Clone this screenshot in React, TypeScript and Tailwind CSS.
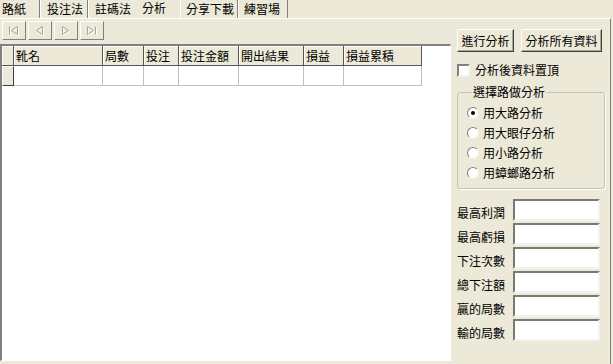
import React from "react";

const tabs = [
  { label: "路紙", cls: "w-[40px] pl-[2px] border-r border-[#808080]" },
  { label: "投注法", cls: "w-[48px] pl-[6px] border-l border-l-white border-r border-r-[#808080]" },
  { label: "註碼法", cls: "w-[49px] pl-[6px] border-l border-l-white" },
  { label: "分析", cls: "w-[43px] pl-[5px] pb-[2px]" },
  { label: "分享下載", cls: "w-[58px] pl-[5px] border-l border-l-white border-r border-r-[#808080]" },
  { label: "練習場", cls: "w-[50px] pl-[5px] border-l border-l-white border-r border-r-[#808080]" },
];

const cols = [
  { label: "靴名", w: "w-[89px]" },
  { label: "局數", w: "w-[41px]" },
  { label: "投注", w: "w-[35px]" },
  { label: "投注金額", w: "w-[60px]" },
  { label: "開出結果", w: "w-[65px]" },
  { label: "損益", w: "w-[40px]" },
  { label: "損益累積", w: "w-[78px]" },
];

const fields = ["最高利潤", "最高虧損", "下注次數", "總下注額", "贏的局數", "輸的局數"];
const radios = ["用大路分析", "用大眼仔分析", "用小路分析", "用蟑螂路分析"];

function NavIcon({ kind }: { kind: number }) {
  const stroke = "#a7a59a";
  const shadow = "#ffffff";
  const draw = (c: string, o: number) => {
    if (kind === 0)
      return (
        <g key={c} stroke={c} fill="none" transform={`translate(${o},${o})`}>
          <path d="M1.5 1.5 V9.5" />
          <path d="M9.5 1.5 L3.5 5.5 L9.5 9.5 Z" />
        </g>
      );
    if (kind === 1)
      return (
        <g key={c} stroke={c} fill="none" transform={`translate(${o},${o})`}>
          <path d="M8.5 1.5 L2.5 5.5 L8.5 9.5 Z" />
        </g>
      );
    if (kind === 2)
      return (
        <g key={c} stroke={c} fill="none" transform={`translate(${o},${o})`}>
          <path d="M2.5 1.5 L8.5 5.5 L2.5 9.5 Z" />
        </g>
      );
    return (
      <g key={c} stroke={c} fill="none" transform={`translate(${o},${o})`}>
        <path d="M1.5 1.5 L7.5 5.5 L1.5 9.5 Z" />
        <path d="M9.5 1.5 V9.5" />
      </g>
    );
  };
  return (
    <svg width="12" height="12" viewBox="0 0 12 12">
      {draw(shadow, 1)}
      {draw(stroke, 0)}
    </svg>
  );
}

function Btn({ children, w }: { children: React.ReactNode; w: string }) {
  return (
    <div
      className={`${w} h-[23px] flex items-center justify-center bg-[#ece9d8] border border-t-white border-l-white border-r-[#404040] border-b-[#404040] shadow-[inset_-1px_-1px_0_#aca899]`}
    >
      {children}
    </div>
  );
}

export default function App() {
  return (
    <div className="w-[613px] h-[364px] bg-[#ece9d8] overflow-hidden flex flex-col text-[12px] leading-none text-black font-['Noto_Sans_CJK_TC','Noto_Sans_CJK_SC',sans-serif]">
      <div className="flex h-[18px] shrink-0">
        {tabs.map((t) => (
          <div key={t.label} className={`h-full flex items-center ${t.cls}`}>
            {t.label}
          </div>
        ))}
      </div>
      <div className="flex w-[611px] h-[346px] border-t border-t-white border-r border-r-[#808080]">
        <div className="w-[451px] flex flex-col">
          <div className="h-[25px] flex items-start pt-[2px] pl-[2px] gap-[2px]">
            {[0, 1, 2, 3].map((k) => (
              <div
                key={k}
                className="w-[24px] h-[19px] flex items-center justify-center border border-t-white border-l-white border-r-[#808080] border-b-[#808080]"
              >
                <NavIcon kind={k} />
              </div>
            ))}
          </div>
          <div className="h-[317px] bg-white border-t-2 border-l-2 border-t-[#808080] border-l-[#808080] border-b border-r border-b-white border-r-white">
            <div className="flex h-[20px]">
              <div className="w-[12px] h-full bg-[#ece9d8] border-r border-b border-[#555] shadow-[inset_1px_1px_0_#fff]" />
              {cols.map((c) => (
                <div
                  key={c.label}
                  className={`${c.w} h-full bg-[#ece9d8] border-r border-b border-[#555] shadow-[inset_1px_1px_0_#fff] flex items-center pl-[2px]`}
                >
                  {c.label}
                </div>
              ))}
            </div>
            <div className="flex h-[20px]">
              <div className="w-[12px] h-full bg-[#ece9d8] border border-t-white border-l-white border-r-[#404040] border-b-[#404040]" />
              {cols.map((c) => (
                <div key={c.label} className={`${c.w} h-full border-r border-b border-[#c0c0c0]`} />
              ))}
            </div>
          </div>
        </div>
        <div className="flex-1 flex flex-col pl-[6px] pt-[10px]">
          <div className="flex gap-[7px]">
            <Btn w="w-[57px]">進行分析</Btn>
            <Btn w="w-[81px]">分析所有資料</Btn>
          </div>
          <div className="flex items-center gap-[5px] mt-[11px] h-[14px]">
            <div className="w-[13px] h-[13px] bg-white border-2 border-t-[#808080] border-l-[#808080] border-b-[#f4f3ee] border-r-[#f4f3ee]" />
            <span>分析後資料置頂</span>
          </div>
          <fieldset className="mt-[9px] w-[148px] h-[103px] border border-[#c5c2b2] rounded-[3px] pl-[9px] shadow-[1px_1px_0_#fff]">
            <legend className="ml-[5px] px-[1px] leading-[12px]">選擇路做分析</legend>
            <div className="flex flex-col gap-[8px] mt-[9px]">
              {radios.map((r, i) => (
                <div key={r} className="flex items-center gap-[4px] h-[12px]">
                  <div className="w-[12px] h-[12px] rounded-full bg-white border border-t-[#808080] border-l-[#808080] border-b-[#f4f3ee] border-r-[#f4f3ee] flex items-center justify-center">
                    {i === 0 && <div className="w-[4px] h-[4px] rounded-full bg-black" />}
                  </div>
                  <span>{r}</span>
                </div>
              ))}
            </div>
          </fieldset>
          <div className="flex flex-col gap-[2px] mt-[10px]">
            {fields.map((f) => (
              <div key={f} className="flex h-[22px]">
                <div className="w-[56px] flex items-end pb-[2px]">{f}</div>
                <div className="w-[87px] h-[22px] bg-white border-2 border-t-[#7a7a72] border-l-[#7a7a72] border-b-[#f4f3ee] border-r-[#f4f3ee]" />
              </div>
            ))}
          </div>
        </div>
      </div>
    </div>
  );
}
